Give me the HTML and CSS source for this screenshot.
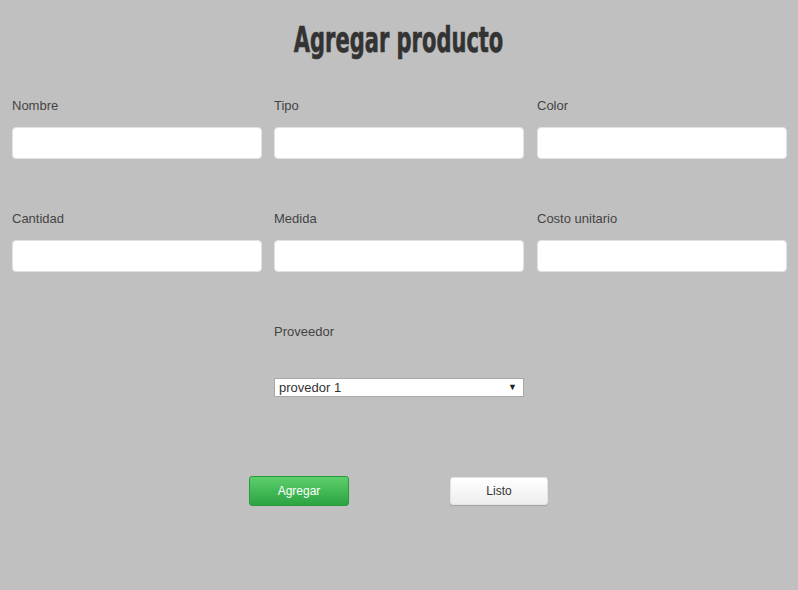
FILE: index.html
```html
<!DOCTYPE html>
<html lang="es">
<head>
<meta charset="utf-8">
<title>Agregar producto</title>
<link rel="stylesheet" href="styles.css">
</head>
<body>
<main class="page">
  <h1 class="title"><span class="title-text">Agregar producto</span></h1>
  <div class="grid">
    <div class="field"><label class="label">Nombre</label><input class="input" type="text"></div>
    <div class="field"><label class="label">Tipo</label><input class="input" type="text"></div>
    <div class="field"><label class="label">Color</label><input class="input" type="text"></div>
    <div class="field"><label class="label">Cantidad</label><input class="input" type="text"></div>
    <div class="field"><label class="label">Medida</label><input class="input" type="text"></div>
    <div class="field"><label class="label">Costo unitario</label><input class="input" type="text"></div>
    <div class="field field-select">
      <label class="label">Proveedor</label>
      <div class="select-wrap">
        <select class="select"><option>provedor 1</option></select>
        <span class="select-arrow">▼</span>
      </div>
    </div>
  </div>
  <div class="actions">
    <button class="btn btn-green">Agregar</button>
    <button class="btn btn-white">Listo</button>
  </div>
</main>
</body>
</html>
```
FILE: styles.css
```css
html, body {
  margin: 0;
  padding: 0;
  background: #c0c0c0;
  font-family: "Liberation Sans", Arial, sans-serif;
  color: #444;
}
.page {
  width: 798px;
  height: 590px;
}
.title {
  margin: 0;
  padding-top: 18px;
  height: 44px;
  text-align: center;
  font-family: "DejaVu Sans", sans-serif;
  font-weight: bold;
  font-size: 35px;
  line-height: 44px;
  color: #333;
  -webkit-text-stroke: 0.7px #333;
}
.title-text {
  display: inline-block;
  transform: scaleX(0.6);
  white-space: nowrap;
}
.grid {
  display: grid;
  grid-template-columns: 262px 263px 250px;
  row-gap: 52px;
  padding: 36px 0 0 12px;
}
.field {
  display: flex;
  flex-direction: column;
}
.field-select {
  grid-column: 2;
}
.label {
  font-size: 13px;
  line-height: 16px;
  height: 16px;
  margin-bottom: 13px;
}
.field-select .label {
  margin-bottom: 38px;
}
.input {
  box-sizing: border-box;
  width: 250px;
  height: 32px;
  margin: 0;
  border: 1px solid #e2e2e2;
  border-radius: 4px;
  background: #fff;
  outline: none;
}
.select-wrap {
  position: relative;
  width: 250px;
  height: 19px;
}
.select {
  -webkit-appearance: none;
  appearance: none;
  box-sizing: border-box;
  width: 250px;
  height: 19px;
  margin: 0;
  padding: 0 0 0 4px;
  border: 1px solid #a9a9a9;
  border-radius: 0;
  background: #fff;
  font-family: "Liberation Sans", Arial, sans-serif;
  font-size: 13px;
  color: #333;
}
.select-arrow {
  position: absolute;
  right: 7px;
  top: 3px;
  font-size: 9px;
  line-height: 12px;
  color: #222;
  pointer-events: none;
}
.actions {
  display: flex;
  align-items: center;
  gap: 101px;
  padding-left: 249px;
  margin-top: 79px;
}
.btn {
  box-sizing: border-box;
  font-family: "Liberation Sans", Arial, sans-serif;
  font-size: 12px;
  margin: 0;
  cursor: pointer;
}
.btn-green {
  width: 100px;
  height: 30px;
  border: 1px solid #2a9b3c;
  border-radius: 3px;
  background: linear-gradient(#5ccf6b, #2ca442);
  color: #fff;
}
.btn-white {
  width: 98px;
  height: 28px;
  border: 1px solid #e4e4e4;
  border-radius: 3px;
  background: linear-gradient(#ffffff, #eeeeee);
  color: #333;
  box-shadow: 0 1px 1px rgba(0,0,0,0.15);
}
```
